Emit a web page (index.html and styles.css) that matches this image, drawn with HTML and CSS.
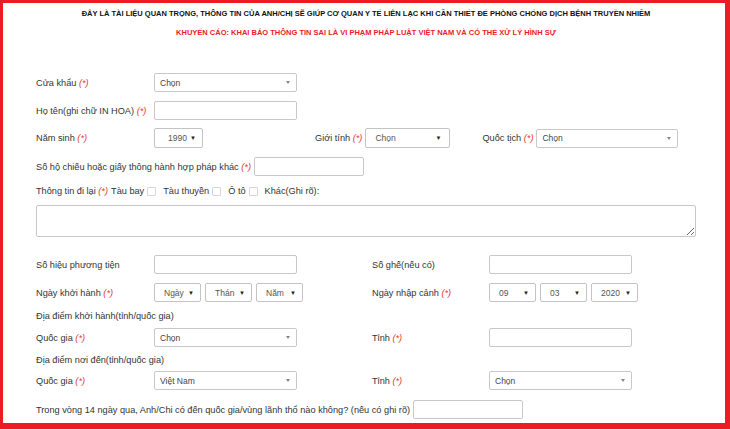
FILE: index.html
```html
<!DOCTYPE html>
<html lang="vi">
<head>
<meta charset="utf-8">
<title>Khai báo y tế</title>
<link rel="stylesheet" href="styles.css">
</head>
<body>
<div class="frame">
  <p class="notice">ĐÂY LÀ TÀI LIỆU QUAN TRỌNG, THÔNG TIN CỦA ANH/CHỊ SẼ GIÚP CƠ QUAN Y TẾ LIÊN LẠC KHI CẦN THIẾT ĐỂ PHÒNG CHỐNG DỊCH BỆNH TRUYỀN NHIỄM</p>
  <p class="warn">KHUYẾN CÁO: KHAI BÁO THÔNG TIN SAI LÀ VI PHẠM PHÁP LUẬT VIỆT NAM VÀ CÓ THỂ XỬ LÝ HÌNH SỰ</p>

  <div class="form">
    <div class="row r1">
      <span class="lbl">Cửa khẩu <i class="req">(*)</i></span>
      <div class="sel wide"><span class="val">Chọn</span><span class="caret"></span></div>
    </div>

    <div class="row r2">
      <span class="lbl">Họ tên(ghi chữ IN HOA) <i class="req">(*)</i></span>
      <input class="inp wide" type="text">
    </div>

    <div class="row r3">
      <span class="lbl">Năm sinh <i class="req">(*)</i></span>
      <div class="nsel year"><span class="val">1990</span><span class="tri">▼</span></div>
      <span class="lbl-inline gender-lbl">Giới tính <i class="req">(*)</i></span>
      <div class="nsel gender"><span class="val">Chọn</span><span class="tri">▼</span></div>
      <span class="lbl-inline nat-lbl">Quốc tịch <i class="req">(*)</i></span>
      <div class="sel nat"><span class="val">Chọn</span><span class="caret"></span></div>
    </div>

    <div class="row r4">
      <span class="lbl-inline">Số hộ chiếu hoặc giấy thông hành hợp pháp khác <i class="req">(*)</i></span>
      <input class="inp short passport" type="text">
    </div>

    <div class="row r5 text-row">
      <span class="lbl-inline">Thông tin đi lại <i class="req">(*)</i></span>
      <span class="opt">Tàu bay</span><span class="chk"></span>
      <span class="opt">Tàu thuyền</span><span class="chk"></span>
      <span class="opt">Ô tô</span><span class="chk"></span>
      <span class="opt">Khác(Ghi rõ):</span>
    </div>

    <textarea class="area"></textarea>

    <div class="row r7">
      <span class="lbl">Số hiệu phương tiện</span>
      <input class="inp wide" type="text">
      <span class="lbl lbl2">Số ghế(nếu có)</span>
      <input class="inp wide" type="text">
    </div>

    <div class="row r8">
      <span class="lbl">Ngày khởi hành <i class="req">(*)</i></span>
      <div class="dates">
        <div class="nsel date"><span class="val">Ngày</span><span class="tri">▼</span></div>
        <div class="nsel date"><span class="val">Thán</span><span class="tri">▼</span></div>
        <div class="nsel date"><span class="val">Năm</span><span class="tri">▼</span></div>
      </div>
      <span class="lbl lbl2">Ngày nhập cảnh <i class="req">(*)</i></span>
      <div class="dates">
        <div class="nsel date"><span class="val">09</span><span class="tri">▼</span></div>
        <div class="nsel date"><span class="val">03</span><span class="tri">▼</span></div>
        <div class="nsel date"><span class="val">2020</span><span class="tri">▼</span></div>
      </div>
    </div>

    <div class="row r9 text-row">
      <span class="lbl-inline">Địa điểm khởi hành(tỉnh/quốc gia)</span>
    </div>

    <div class="row r10">
      <span class="lbl">Quốc gia <i class="req">(*)</i></span>
      <div class="sel wide"><span class="val">Chọn</span><span class="caret"></span></div>
      <span class="lbl lbl2">Tỉnh <i class="req">(*)</i></span>
      <input class="inp wide" type="text">
    </div>

    <div class="row r11 text-row">
      <span class="lbl-inline">Địa điểm nơi đến(tỉnh/quốc gia)</span>
    </div>

    <div class="row r12">
      <span class="lbl">Quốc gia <i class="req">(*)</i></span>
      <div class="sel wide"><span class="val">Việt Nam</span><span class="caret"></span></div>
      <span class="lbl lbl2">Tỉnh <i class="req">(*)</i></span>
      <div class="sel wide"><span class="val">Chọn</span><span class="caret"></span></div>
    </div>

    <div class="row r13">
      <span class="lbl-inline">Trong vòng 14 ngày qua, Anh/Chi có đến quốc gia/vùng lãnh thổ nào không? (nếu có ghi rõ)</span>
      <input class="inp short visited" type="text">
    </div>
  </div>
</div>
</body>
</html>
```

FILE: styles.css
```css
* { box-sizing: border-box; }

html, body {
  margin: 0;
  padding: 0;
  background: #fff;
}

body {
  font-family: "Liberation Sans", Arial, sans-serif;
  color: #333;
  width: 730px;
  height: 429px;
  overflow: hidden;
}

.frame {
  width: 730px;
  height: 429px;
  border-style: solid;
  border-color: #ec1c24;
  border-width: 3px 5px 6px 3px;
  padding: 0 29px 0 33px;
  overflow: hidden;
}

.notice {
  margin: 6px 0 0;
  font-size: 7.5px;
  line-height: 10px;
  font-weight: bold;
  color: #111;
  text-align: center;
}

.warn {
  margin: 9px 0 0;
  font-size: 7.5px;
  line-height: 10px;
  font-weight: bold;
  color: #ec1c24;
  text-align: center;
}

.form {
  margin-top: 35px;
  display: flex;
  flex-direction: column;
}

.row {
  display: flex;
  align-items: center;
  height: 19px;
  font-size: 9.2px;
  white-space: nowrap;
}

.text-row { height: 14px; }

.r2 { margin-top: 9px; }
.r3 { margin-top: 8px; height: 20px; }
.r4 { margin-top: 9px; }
.r5 { margin-top: 8px; }
.r7 { margin-top: 18px; }
.r8 { margin-top: 9px; }
.r9 { margin-top: 7px; }
.r10 { margin-top: 5px; }
.r11 { margin-top: 6px; }
.r12 { margin-top: 4px; }
.r13 { margin-top: 10px; }

.lbl {
  width: 118px;
  flex: none;
}

.lbl2 {
  margin-left: 75px;
  width: 117px;
}

.lbl-inline { flex: none; }

.req {
  color: #e53935;
  font-style: italic;
}

.inp {
  height: 19px;
  border: 1px solid #c8c8c8;
  border-radius: 2px;
  background: #fff;
  padding: 0 5px;
  font: inherit;
  outline: none;
  flex: none;
}

.wide { width: 143px; }

.passport { margin-left: 3px; width: 110px; }
.visited { margin-left: 3px; width: 110px; }

.sel {
  height: 19px;
  border: 1px solid #c8c8c8;
  border-radius: 2px;
  background: #fff;
  display: flex;
  align-items: center;
  justify-content: space-between;
  padding: 0 6px 0 5px;
  color: #444;
  font-size: 8.5px;
  flex: none;
}

.caret {
  width: 0;
  height: 0;
  border-left: 2px solid transparent;
  border-right: 2px solid transparent;
  border-top: 3px solid #888;
}

.nat { width: 142px; margin-left: 3px; }

.nsel {
  height: 20px;
  border: 1px solid #c4c4c4;
  border-radius: 2px;
  background: #fff;
  display: flex;
  align-items: center;
  justify-content: space-between;
  padding: 0 6px 0 9px;
  color: #555;
  font-size: 8.5px;
  flex: none;
}

.tri {
  font-size: 6px;
  color: #222;
}

.year { width: 49px; padding-left: 13px; }

.gender-lbl { margin-left: 112px; }
.gender { width: 85px; margin-left: 3px; padding-left: 9px; padding-right: 8px; }

.nat-lbl { margin-left: 32px; }

.dates {
  display: flex;
  gap: 4px;
  flex: none;
  width: 151px;
}

.r8 .lbl2 { margin-left: 67px; }

.date {
  width: 47px;
  height: 19px;
}

.opt { margin-left: 3px; }

.chk {
  width: 9px;
  height: 9px;
  border: 1px solid #d6d6d6;
  border-radius: 1px;
  background: #fff;
  margin-left: 3px;
  margin-right: 4px;
}

.area {
  display: block;
  margin-top: 7px;
  width: 660px;
  height: 32px;
  border: 1px solid #c8c8c8;
  border-radius: 2px;
  resize: vertical;
  font: inherit;
  outline: none;
}
```
